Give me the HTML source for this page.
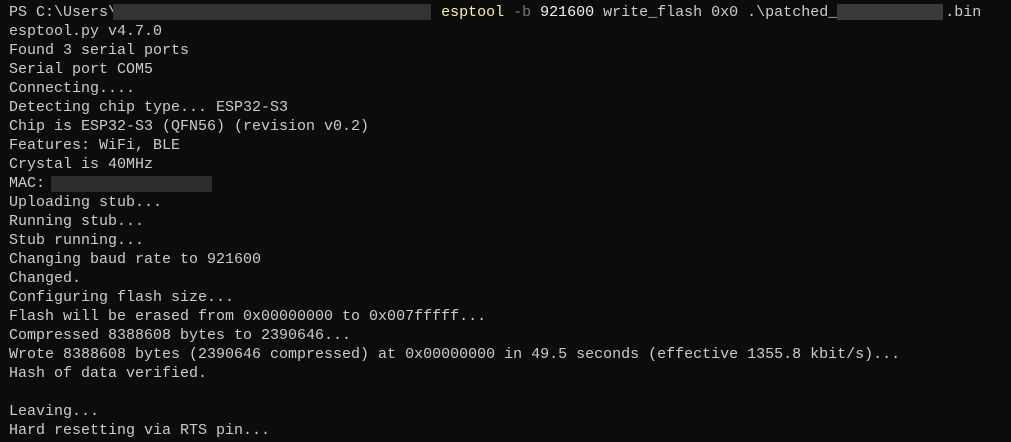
<!DOCTYPE html>
<html><head><meta charset="utf-8"><style>
html,body{margin:0;padding:0;background:#0c0c0c;width:1011px;height:442px;overflow:hidden}
pre{margin:0;position:absolute;left:9px;top:3px;font-family:"Liberation Mono",monospace;font-size:15px;line-height:19px;color:#cccccc}
.y{color:#f9f1a5}.g{color:#767676}.w{color:#f2f2f2}
.b{position:absolute;background:#3a3a3a;height:16px}
</style></head><body>
<pre>PS C:\Users\                                    <span class="y">esptool</span> <span class="g">-b</span> <span class="w">921600</span> write_flash 0x0 .\patched_            .bin
esptool.py v4.7.0
Found 3 serial ports
Serial port COM5
Connecting....
Detecting chip type... ESP32-S3
Chip is ESP32-S3 (QFN56) (revision v0.2)
Features: WiFi, BLE
Crystal is 40MHz
MAC:
Uploading stub...
Running stub...
Stub running...
Changing baud rate to 921600
Changed.
Configuring flash size...
Flash will be erased from 0x00000000 to 0x007fffff...
Compressed 8388608 bytes to 2390646...
Wrote 8388608 bytes (2390646 compressed) at 0x00000000 in 49.5 seconds (effective 1355.8 kbit/s)...
Hash of data verified.

Leaving...
Hard resetting via RTS pin...</pre>
<div class="b" style="left:113px;top:4px;width:318px;background:#333"></div>
<div class="b" style="left:837px;top:4px;width:106px"></div>
<div class="b" style="left:51px;top:176px;width:161px;background:#2e2e2e"></div>
</body></html>
